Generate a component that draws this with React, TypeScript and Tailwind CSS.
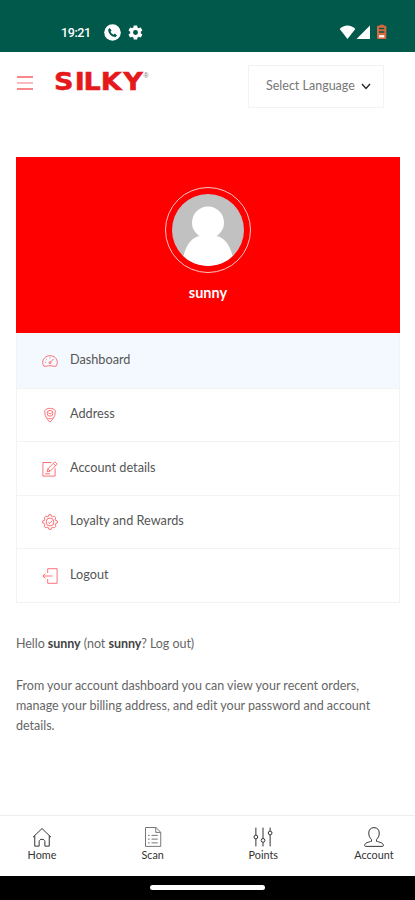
import type { ReactNode } from 'react'

function Icon({ children, className }: { children: ReactNode; className: string }) {
  return (
    <svg viewBox="0 0 16 16" fill="none" stroke="currentColor" strokeWidth="0.8" className={className}>
      {children}
    </svg>
  )
}

const menuItems = [
  {
    label: 'Dashboard',
    height: 'h-[56px]',
    icon: (
      <>
        <path d="M4.800 13.200H1.900C1.100 12.200.7 10.900.7 9.600.7 5.600 3.900 2.700 8 2.700s7.300 2.900 7.300 6.900c0 1.300-.4 2.600-1.200 3.600h-2.900" />
        <path d="M4.800 13.200c1.900-.7 4.500-.7 6.400 0" />
        <circle cx="8" cy="9.700" r="1" />
        <path d="M8.700 9l2.800-3M3 9.300h1M4.200 5.900l.7.600M8 4.400v1" />
      </>
    )
  },
  {
    label: 'Address',
    height: 'h-[53px]',
    icon: (
      <>
        <path d="M8 15C5.400 12.600 2.800 9.500 2.800 5.800V3.500C4.500.6 11.500.6 13.200 3.500v2.300C13.200 9.500 10.600 12.600 8 15z" />
        <circle cx="8" cy="6.300" r="2.900" />
        <path d="M6.300 5.800l1.700 1.300 1.700-1.300M5.500 11c1.500 1 3.500 1 5 0" />
      </>
    )
  },
  {
    label: 'Account details',
    height: 'h-[54px]',
    icon: (
      <>
        <path d="M9.500 1.500H.9v13.600h12.200V7.200" />
        <path d="M5.100 10.900l.7-3L12.900.8l2.300 2.300-7.100 7.100zM11.300 2.400l2.300 2.300M5.800 7.900l2.300 2.300M3 12.800h5" />
      </>
    )
  },
  {
    label: 'Loyalty and Rewards',
    height: 'h-[53px]',
    icon: (
      <>
        <path d="M6.900.7h2.200l.5 1.700 1.100.4 1.500-.8L13.900 3.700l-.8 1.500.5 1.200 1.700.5v2.200l-1.700.5-.5 1.200.8 1.500-1.700 1.700-1.500-.8-1.100.4-.5 1.700H6.900l-.5-1.700-1.100-.4-1.500.8-1.700-1.700.8-1.500-.5-1.200L.7 9.100V6.900l1.700-.5.5-1.200-.8-1.500L3.800 2l1.500.8 1.100-.4z" />
        <circle cx="8" cy="8" r="3.900" />
        <path d="M6 8.200l1.400 1.400L10.200 6.500" />
      </>
    )
  },
  {
    label: 'Logout',
    height: 'h-[53px]',
    icon: (
      <>
        <path d="M5.700 5V.7h9.400v14.600H5.700V11" />
        <path d="M10.500 8H.9M3.500 5.500L.9 8l2.600 2.500" />
      </>
    )
  }
]

const tabs = [
  {
    label: 'Home',
    color: 'text-[#333]',
    icon: (
      <>
        <path d="M.8 8.200L8 1.200l7.200 7" />
        <path d="M2.200 7v8.300h3.500v-3.700c0-2.400 4.600-2.400 4.600 0v3.700h3.500V7" />
      </>
    )
  },
  {
    label: 'Scan',
    color: 'text-[#777]',
    icon: (
      <>
        <path d="M2 .4h8.300L14.200 4.200v11.300H2zM10.200.5v3.800h4" />
        <path d="M6.800 6.700h5M6.800 9.700h5M6.800 12.700h5M4 6.700h1.300M4 9.700h1.300M4 12.700h1.300" />
      </>
    )
  },
  {
    label: 'Points',
    color: 'text-[#333]',
    icon: (
      <>
        <path d="M2.300.5v6M2.300 9.500v6M8 .5v8.700M8 12.200v3.300M13.700.5v2.800M13.700 6.300v9.200" />
        <circle cx="2.300" cy="8" r="1.500" />
        <circle cx="8" cy="10.700" r="1.500" />
        <circle cx="13.700" cy="4.800" r="1.500" />
      </>
    )
  },
  {
    label: 'Account',
    color: 'text-[#333]',
    icon: (
      <path d="M8 .5C5.300.5 3.800 2.200 3.800 4.900c0 2.200.9 3.900 2.200 5v1.500c-2 .7-5.500 1.100-5.500 3.300 0 .5.3.8.8.8h13.400c.5 0 .8-.3.8-.8 0-2.200-3.500-2.600-5.500-3.300V9.900c1.300-1.100 2.200-2.800 2.200-5C12.200 2.200 10.700.5 8 .5z" />
    )
  }
]

function StatusBar() {
  return (
    <div className="flex h-[52px] items-start bg-[#00594b] pr-[27px] pl-[61px] pt-[24px] text-white">
      <span className="w-[43px] font-[Roboto] text-[12.500px] leading-[17px] font-medium tracking-[-0.400px]">19:21</span>
      <svg viewBox="0 0 17 17" className="h-[17px] w-[17px]">
        <circle cx="8.500" cy="8.500" r="8.300" fill="white" />
        <path
          d="M5.700 4.100L4.200 5.400C4 9.400 7.800 13 11.700 12.900L13 11.400 10.800 9.600 9.500 10.700C8.200 10.200 7 9 6.500 7.600L7.600 6.500z"
          fill="#00594b"
        />
      </svg>
      <svg viewBox="0 0 24 24" fill="currentColor" className="ml-[6px] h-[17px] w-[17px]">
        <path d="M19.400 13c.1-.3.100-.7.100-1s0-.7-.1-1l2.100-1.700c.2-.1.2-.4.100-.6l-2-3.500c-.1-.2-.4-.3-.6-.2l-2.500 1a7 7 0 0 0-1.700-1l-.4-2.600c0-.2-.2-.4-.5-.4h-4c-.3 0-.5.200-.5.400L9 5a7 7 0 0 0-1.700 1l-2.500-1c-.2-.1-.5 0-.6.200l-2 3.500c-.1.200-.1.500.1.600L4.500 11a8 8 0 0 0 0 2l-2.200 1.700c-.2.100-.2.400-.1.600l2 3.500c.1.200.4.300.6.200l2.500-1a7 7 0 0 0 1.700 1l.4 2.600c0 .2.200.4.500.4h4c.3 0 .5-.2.500-.4l.4-2.600a7 7 0 0 0 1.700-1l2.500 1c.2.100.5 0 .6-.2l2-3.500c.1-.2.100-.5-.1-.6zM12 15.500a3.500 3.500 0 1 1 0-7 3.500 3.500 0 0 1 0 7z" />
      </svg>
      <svg viewBox="0 0 49 16" className="ml-auto h-4 w-[49px]">
        <path d="M.7 5C4.800.3 12.200.3 16.300 5L8.500 15z" fill="white" />
        <path d="M31 1.500V15H17.500z" fill="white" />
        <path d="M40.800 1.800V.8h4v1H46.500q.8 0 .8.800v11.600q0 .8-.8.800H38.800q-.8 0-.8-.8V2.600q0-.8.800-.8z" fill="#d9683c" />
        <path d="M40 4.500h5.300M40 8h5.300" stroke="#00594b" strokeWidth="1.500" />
        <path d="M40 12.300h5.300" stroke="white" strokeWidth="2.300" />
      </svg>
    </div>
  )
}

function Header() {
  return (
    <header className="flex h-[105px] items-start pt-[13px] pl-[17px]">
      <div className="mt-[11px] flex w-4 flex-col gap-1">
        <span className="h-0.5 bg-[#f9868c]" />
        <span className="h-0.5 bg-[#fcb9bd]" />
        <span className="h-0.5 bg-[#f9868c]" />
      </div>
      <svg viewBox="-3 -4 103 30" className="mt-px ml-[19px] h-[30px] w-[103px]">
        <text
          x="-0.9 17.600 25.200 40.400 60.400"
          y="20.300"
          transform="scale(1.130 1)"
          strokeWidth="0.5"
          className="fill-[#e5191c] stroke-[#e5191c] font-['DejaVu_Sans'] text-[24px] font-bold"
        >
          SILKY
        </text>
        <text x="88.500" y="8" className="fill-[#777] font-['Liberation_Sans'] text-[7px]">
          ®
        </text>
      </svg>
      <div className="ml-[93px] flex h-[43px] w-[136px] items-center border-[1.500px] border-[#f3f3f3] pl-[17px] text-[12.500px] text-[#777]">
        <span className="w-[95px] whitespace-nowrap">Select Language</span>
        <svg viewBox="0 0 10 7" fill="none" className="h-[7px] w-[10px]">
          <path d="M1 1l4 4.500L9 1" stroke="#222" strokeWidth="1.300" />
        </svg>
      </div>
    </header>
  )
}

export default function App() {
  return (
    <div className="flex h-[900px] w-[415px] flex-col overflow-hidden bg-white font-[Lato,sans-serif] text-[#666]">
      <StatusBar />
      <Header />

      <main className="h-[658px] pr-[15px] pl-4">
        <div className="flex h-[176px] flex-col items-center bg-[#ff0000] pt-[30px]">
          <div className="flex h-[86px] w-[86px] items-center justify-center rounded-full border border-[#ffc4c4]">
            <svg viewBox="0 0 72 72" className="h-[72px] w-[72px] rounded-full">
              <rect width="72" height="72" fill="#c1c1c1" />
              <circle cx="36" cy="28.500" r="16" fill="white" />
              <path d="M10 72c1-18 9-29 18-30h16c9 1 17 12 18 30z" fill="white" />
            </svg>
          </div>
          <span className="mt-[10px] text-[14.500px] leading-5 font-bold text-white">sunny</span>
        </div>

        <nav className="border-x border-b border-[#f3f3f3]">
          {menuItems.map((item) => (
            <a
              key={item.label}
              className={`${item.height} flex items-center border-b border-[#f3f3f3] pl-[25px] text-[12.700px] text-[#555] first:bg-[#f4f9ff] last:border-b-0`}
            >
              <Icon className="h-4 w-4 text-[#fa5058]">{item.icon}</Icon>
              <span className="ml-3 pb-0.5">{item.label}</span>
            </a>
          ))}
        </nav>

        <div className="mt-[31px] text-[12.500px] leading-5">
          <p className="tracking-[-0.050px]">
            Hello <strong className="text-[#444]">sunny</strong> (not <strong className="text-[#444]">sunny</strong>? Log out)
          </p>
          <p className="mt-[22px]">
            From your account dashboard you can view your recent orders,
            <br />
            manage your billing address, and edit your password and account
            <br />
            details.
          </p>
        </div>
      </main>

      <footer className="flex h-[61px] shrink-0 justify-between border-t border-[#eee] pr-[13px] pl-[14px] pt-[11px]">
        {tabs.map((tab) => (
          <a key={tab.label} className="flex w-14 flex-col items-center">
            <Icon className={`${tab.color} h-5 w-5`}>{tab.icon}</Icon>
            <span className="mt-[2px] text-[10.800px] leading-3 text-[#333]">{tab.label}</span>
          </a>
        ))}
      </footer>

      <div className="flex h-6 shrink-0 justify-center bg-black pt-[9px]">
        <span className="h-[5px] w-[115px] rounded-full bg-white" />
      </div>
    </div>
  )
}
